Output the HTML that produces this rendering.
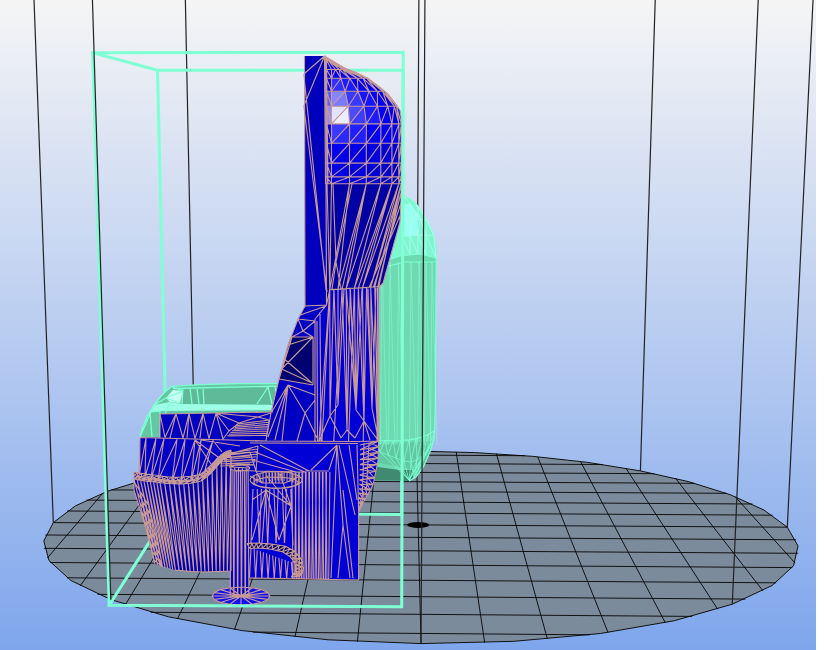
<!DOCTYPE html>
<html><head><meta charset="utf-8"><title>3D View</title>
<style>html,body{margin:0;padding:0;background:#fff;}body{width:826px;height:650px;overflow:hidden;}svg{display:block}</style>
</head><body>
<svg width="826" height="650" viewBox="0 0 826 650">
<defs>
<linearGradient id="bg" x1="0" y1="0" x2="0" y2="1"><stop offset="0" stop-color="#f5f5f5"/><stop offset="1" stop-color="#7fa6ec"/></linearGradient>
<clipPath id="vp"><rect x="0" y="0" width="816" height="650"/></clipPath>
</defs>
<rect x="0" y="0" width="826" height="650" fill="#fff"/>
<rect x="0" y="0" width="816" height="650" fill="url(#bg)"/>
<g clip-path="url(#vp)">
<polygon points="787.3,527.2 763.9,510.0 730.2,494.7 688.4,481.6 640.4,470.9 587.9,462.4 532.3,456.3 474.7,452.6 416.4,451.1 358.2,452.0 301.2,455.1 246.4,460.6 194.9,468.5 148.1,478.7 107.7,491.2 75.4,505.9 53.3,522.6 43.8,541.0 49.0,560.6 70.9,580.5 110.8,599.6 168.4,616.8 242.2,630.6 328.2,639.8 421.0,643.6 513.9,641.3 600.3,633.5 674.4,620.7 732.3,604.2 772.1,585.5 793.6,565.7 798.0,545.9" fill="#7c8b9c" stroke="#111" stroke-width="1"/>
<path d="M47.4,558.0 L103.0,492.9 M252.8,632.1 L589.6,634.8 M80.1,585.9 L160.6,475.6 M150.7,612.3 L692.2,616.4 M125.3,604.8 L209.1,466.0 M97.6,594.3 L745.5,599.1 M177.5,618.9 L253.6,459.8 M66.9,577.8 L776.1,582.8 M234.5,629.5 L295.8,455.6 M50.3,562.5 L792.3,567.6 M294.9,637.0 L336.7,452.9 M43.9,548.3 L798.2,553.3 M357.4,641.7 L376.7,451.5 M45.3,535.0 L796.1,539.8 M421.0,643.6 L416.4,451.1 M53.3,522.6 L787.3,527.2 M484.7,642.7 L456.2,451.9 M67.1,511.0 L772.6,515.2 M547.4,639.0 L496.4,453.7 M86.4,500.1 L752.4,504.0 M608.0,632.4 L537.7,456.8 M111.3,489.9 L726.5,493.3 M665.3,622.7 L580.5,461.5 M142.3,480.2 L694.4,483.3 M717.7,609.2 L625.9,468.2 M181.1,471.1 L654.5,473.7 M762.9,590.8 L675.6,478.4 M231.7,462.6 L602.8,464.5 M795.1,563.1 L735.1,496.6 M308.5,454.6 L524.9,455.7" stroke="#050505" stroke-width="0.9" fill="none"/>
<ellipse cx="418.2" cy="524.9" rx="11" ry="3" fill="#000"/>
<path d="M787.3,527.2 L817.3,-87.4 M640.4,470.9 L656.9,-53.5 M416.4,451.1 L419.1,-41.8 M194.9,468.5 L184.3,-52.1 M53.3,522.6 L30.9,-84.7" stroke="#222" stroke-width="1.2" fill="none"/>
<path d="M157.5 70.3L403.2 69.9 M403.2 69.9L401.7 514.4 M401.7 514.4L168.0 512.6 M168.0 512.6L157.5 70.3 M92.7 52.7L157.5 70.3 M109.2 605.2L168.0 512.6" stroke="#7fffd4" stroke-width="3" fill="none" stroke-linecap="square"/>
<polygon points="372.0,200.0 404.2,195.7 410.0,199.0 416.2,204.0 422.0,212.0 427.3,220.7 431.0,228.0 433.8,235.4 435.4,243.0 436.2,250.2 436.2,260.0 435.4,400.0 434.8,425.0 433.8,440.0 430.0,452.0 423.8,466.0 416.0,477.0 409.0,481.0 372.0,480.0" fill="#6ddab2" />
<polygon points="372.0,200.0 404.2,195.7 410.0,199.0 416.2,204.0 422.0,212.0 427.3,220.7 431.0,228.0 433.8,235.4 435.4,243.0 436.2,250.2 436.2,258.0 420.0,254.0 400.0,256.0 385.0,262.0 372.0,262.0" fill="#80f6d0" />
<polygon points="402.0,206.0 410.0,203.0 418.0,214.0 418.0,235.0 402.0,236.0" fill="#98fff2" />
<polygon points="372.0,466.0 385.0,468.0 400.0,470.0 412.0,470.0 416.0,477.0 409.0,481.0 372.0,480.0" fill="#3f8a70" />
<polygon points="372.0,445.0 433.5,441.0 430.0,452.0 423.8,466.0 416.0,477.0 412.0,470.0 395.0,466.0 372.0,462.0" fill="#62c8a2" />
<polyline points="404.2,195.7 410.0,199.0 416.2,204.0 422.0,212.0 427.3,220.7 431.0,228.0 433.8,235.4 435.4,243.0 436.2,250.2 436.2,260.0 435.4,400.0 434.8,425.0 433.8,440.0 430.0,452.0 423.8,466.0 416.0,477.0 409.0,481.0" fill="none" stroke="#7fffd4" stroke-width="1.2"/>
<path d="M380.0 262.0L400.0 256.0 M400.0 256.0L420.0 254.0 M420.0 254.0L436.0 258.0 M380.0 268.0L405.0 262.0 M405.0 262.0L436.0 262.0" stroke="#7fffd4" stroke-width="1.2" fill="none" opacity="1"/>
<path d="M402.0 220.0L412.0 219.0 M412.0 219.0L420.0 219.0 M420.0 219.0L427.3 220.7 M402.0 236.0L410.0 236.0 M410.0 236.0L418.0 235.0 M418.0 235.0L426.0 235.0 M426.0 235.0L433.8 235.4 M402.0 206.0L402.0 220.0 M402.0 206.0L412.0 219.0 M410.0 204.0L412.0 219.0 M410.0 204.0L420.0 219.0 M416.2 204.0L420.0 219.0 M416.2 204.0L427.3 220.7 M416.2 204.0L427.3 220.7 M402.0 220.0L402.0 236.0 M402.0 220.0L410.0 236.0 M412.0 219.0L410.0 236.0 M412.0 219.0L418.0 235.0 M420.0 219.0L418.0 235.0 M420.0 219.0L426.0 235.0 M427.3 220.7L426.0 235.0 M427.3 220.7L433.8 235.4 M427.3 220.7L433.8 235.4 M402.0 236.0L402.0 256.0 M402.0 236.0L410.0 254.0 M410.0 236.0L410.0 254.0 M410.0 236.0L418.0 254.0 M418.0 235.0L418.0 254.0 M418.0 235.0L426.0 255.0 M426.0 235.0L426.0 255.0 M426.0 235.0L436.0 258.0 M433.8 235.4L436.0 258.0 M404.2 195.7L410.0 204.0 M404.2 195.7L402.0 206.0" stroke="#a8fff0" stroke-width="0.9" fill="none" opacity="0.9"/>
<path d="M382.0 262.0L380.5 445.0 M382.0 262.0L387.0 445.0 M390.0 262.0L388.5 445.0 M390.0 262.0L395.0 445.0 M398.5 262.0L397.0 445.0 M398.5 262.0L403.5 445.0 M411.0 262.0L409.5 445.0 M411.0 262.0L416.0 445.0 M419.0 262.0L417.5 445.0 M419.0 262.0L424.0 445.0 M426.0 262.0L424.5 445.0 M426.0 262.0L431.0 445.0 M432.0 262.0L430.5 445.0 M432.0 262.0L437.0 445.0" stroke="#9cffe4" stroke-width="0.9" fill="none" opacity="0.45"/>
<polyline points="376.0,441.0 385.0,440.5 393.0,440.8 400.8,440.6 409.0,439.8 416.0,438.6 422.3,437.0 428.0,434.5 434.6,430.8" fill="none" stroke="#7fffd4" stroke-width="1.2"/>
<clipPath id="gb"><polygon points="372.0,200.0 404.2,195.7 410.0,199.0 416.2,204.0 422.0,212.0 427.3,220.7 431.0,228.0 433.8,235.4 435.4,243.0 436.2,250.2 436.2,260.0 435.4,400.0 434.8,425.0 433.8,440.0 430.0,452.0 423.8,466.0 416.0,477.0 409.0,481.0 372.0,480.0"/></clipPath>
<g clip-path="url(#gb)"><path d="M376.0 441.0L380.0 452.0 M385.0 440.5L388.0 455.0 M393.0 440.8L396.0 458.0 M400.8 440.6L404.0 461.0 M409.0 439.8L411.0 462.0 M416.0 438.6L417.0 460.0 M422.3 437.0L423.0 455.0 M428.0 434.5L428.0 449.0 M434.6 430.8L432.0 443.0 M385.0 440.5L380.0 452.0 M393.0 440.8L388.0 455.0 M400.8 440.6L396.0 458.0 M409.0 439.8L404.0 461.0 M416.0 438.6L411.0 462.0 M422.3 437.0L417.0 460.0 M428.0 434.5L423.0 455.0 M434.6 430.8L428.0 449.0 M380.0 452.0L388.0 455.0 M388.0 455.0L396.0 458.0 M396.0 458.0L404.0 461.0 M404.0 461.0L411.0 462.0 M411.0 462.0L417.0 460.0 M417.0 460.0L423.0 455.0 M423.0 455.0L428.0 449.0 M428.0 449.0L432.0 443.0 M380.0 452.0L409.0 480.0 M388.0 455.0L409.0 480.0 M396.0 458.0L409.0 480.0 M404.0 461.0L409.0 480.0 M411.0 462.0L409.0 480.0 M417.0 460.0L409.0 480.0 M423.0 455.0L409.0 480.0 M428.0 449.0L409.0 480.0 M432.0 443.0L409.0 480.0 M411.0 462.0L414.0 478.0 M417.0 460.0L414.0 478.0 M423.0 455.0L414.0 478.0 M428.0 449.0L414.0 478.0 M432.0 443.0L414.0 478.0" stroke="#7fffd4" stroke-width="0.9" fill="none" opacity="0.8"/></g>
<polygon points="171.4,386.3 200.0,384.6 240.0,383.6 285.0,383.5 285.0,440.0 139.8,440.0 139.8,437.5 142.0,429.0 147.0,417.0 154.0,405.0 162.0,395.0" fill="#64c6a2" />
<polygon points="183.0,388.0 283.0,386.0 283.0,404.0 182.0,404.0" fill="#5eba98" />
<polygon points="166.0,398.0 173.0,390.0 183.0,391.0 180.0,403.0 170.0,402.0" fill="#c4fff2" />
<polygon points="154.0,405.0 170.0,402.0 182.0,404.0 275.0,405.0 275.0,410.0 160.0,411.0 150.0,412.0" fill="#9cffe6" />
<path d="M171.4 386.3L200.0 384.6 M200.0 384.6L240.0 383.6 M240.0 383.6L285.0 383.5 M171.4 386.3L162.0 395.0 M162.0 395.0L154.0 405.0 M154.0 405.0L147.0 417.0 M147.0 417.0L142.0 429.0 M142.0 429.0L139.8 437.5 M173.0 388.5L283.0 386.0 M183.0 388.0L182.0 404.0 M190.0 388.0L192.0 404.0 M197.0 388.0L199.0 404.0 M203.0 388.0L204.0 404.0 M171.4 386.3L183.0 391.0 M166.0 398.0L183.0 391.0 M166.0 398.0L180.0 403.0 M154.0 405.0L166.0 398.0 M150.0 412.0L160.0 411.0 M160.0 411.0L160.0 437.0 M150.0 412.0L152.0 437.0 M154.0 405.0L140.0 437.0 M170.0 402.0L165.0 414.0 M257.0 404.0L268.0 387.0 M268.0 387.0L272.0 404.0 M275.0 387.0L278.0 404.0" stroke="#7fffd4" stroke-width="1.3" fill="none" opacity="1"/>
<polygon points="304.5,56.0 324.5,56.0 326.0,184.0 326.5,305.0 305.0,306.0" fill="#0000bc" />
<polygon points="324.9,55.9 333.5,64.8 344.6,67.9 355.7,72.2 366.8,77.7 377.9,85.7 387.7,93.7 395.1,103.0 400.0,110.3 401.3,119.0 401.2,184.0 326.0,184.0" fill="#0000f2" />
<polygon points="326.0,184.0 401.2,184.0 401.0,200.0 400.0,222.0 383.1,283.0 378.9,287.5 329.8,289.7 326.5,305.0" fill="#0000a4" />
<polygon points="326.5,305.0 329.8,289.7 378.9,287.5 378.6,441.0 378.0,461.0 373.0,485.0 363.0,503.0 359.0,511.0 358.6,580.0 250.0,578.0 250.0,441.0 315.0,441.0 315.0,319.0" fill="#0000d6" />
<polygon points="305.0,306.0 326.5,305.0 315.0,319.0 315.0,441.0 266.0,441.0 271.0,413.0 279.0,379.0 288.0,345.0 298.0,319.0" fill="#0000c4" />
<polygon points="292.0,337.0 313.0,337.0 313.0,385.0 279.0,379.0 285.0,360.0" fill="#000070" />
<polygon points="160.0,414.0 273.0,412.0 266.0,441.0 160.0,441.0" fill="#0000c0" />
<polygon points="140.0,437.0 266.0,441.0 266.0,490.0 139.0,484.0" fill="#0000c8" />
<polygon points="134.0,472.0 155.0,475.0 175.0,477.4 190.0,476.5 201.0,474.0 213.0,463.0 221.0,455.0 231.0,450.0 250.0,450.0 250.0,578.0 231.0,571.0 205.0,572.0 175.0,570.0 155.0,564.0 145.0,525.0 134.0,490.0" fill="#0000b0" />
<polygon points="270.0,596.0 269.0,598.3 266.1,600.5 261.5,602.4 255.5,603.8 248.5,604.7 241.0,605.0 233.5,604.7 226.5,603.8 220.5,602.4 215.9,600.5 213.0,598.3 212.0,596.0 213.0,593.7 215.9,591.5 220.5,589.6 226.5,588.2 233.5,587.3 241.0,587.0 248.5,587.3 255.5,588.2 261.5,589.6 266.1,591.5 269.0,593.7 270.0,596.0" fill="#1010f0" />
<polygon points="231.0,470.0 249.0,470.0 249.0,597.0 231.0,597.0" fill="#0000c8" />
<polygon points="331.5,91.3 345.2,91.3 331.5,106.2" fill="#8585ff" />
<polygon points="345.2,91.3 348.3,106.2 331.5,106.2" fill="#7a7aff" />
<polygon points="345.2,91.3 358.0,91.3 348.3,106.2" fill="#3838ff" />
<polygon points="358.0,91.3 364.0,106.2 348.3,106.2" fill="#3838ff" />
<polygon points="331.5,106.2 348.3,106.2 331.5,123.9" fill="#e2e2fb" />
<polygon points="348.3,106.2 349.6,123.9 331.5,123.9" fill="#ececfc" />
<polygon points="348.3,106.2 364.0,106.2 349.6,123.9" fill="#4a4aff" />
<polygon points="364.0,106.2 366.4,123.9 349.6,123.9" fill="#3c3cff" />
<polygon points="364.0,106.2 377.5,106.2 366.4,123.9" fill="#1c1cff" />
<polygon points="377.5,106.2 380.9,123.9 366.4,123.9" fill="#1c1cff" />
<polygon points="331.5,123.9 349.6,123.9 331.5,143.3" fill="#3a3aff" />
<polygon points="349.6,123.9 349.5,143.3 331.5,143.3" fill="#2a2aff" />
<polygon points="349.6,123.9 366.4,123.9 349.5,143.3" fill="#2020ff" />
<polygon points="366.4,123.9 366.3,143.3 349.5,143.3" fill="#2020ff" />
<polygon points="331.5,78.3 340.9,78.3 331.5,91.3" fill="#3030ff" />
<polygon points="340.9,78.3 345.2,91.3 331.5,91.3" fill="#3030ff" />
<polygon points="340.9,78.3 349.8,78.3 345.2,91.3" fill="#1a1aff" />
<polygon points="349.8,78.3 358.0,91.3 345.2,91.3" fill="#1a1aff" />
<polygon points="358.0,91.3 369.0,91.3 364.0,106.2" fill="#1414ff" />
<polygon points="369.0,91.3 377.5,106.2 364.0,106.2" fill="#1414ff" />
<polygon points="331.5,143.3 349.5,143.3 331.5,163.1" fill="#0000ec" />
<polygon points="349.5,143.3 349.5,163.1 331.5,163.1" fill="#0000ec" />
<polygon points="349.5,143.3 366.3,143.3 349.5,163.1" fill="#0000e4" />
<polygon points="366.3,143.3 366.3,163.1 349.5,163.1" fill="#0000e4" />
<polygon points="366.3,143.3 380.8,143.3 366.3,163.1" fill="#0000dc" />
<polygon points="380.8,143.3 380.8,163.1 366.3,163.1" fill="#0000dc" />
<polygon points="380.8,143.3 391.9,143.3 380.8,163.1" fill="#0000d4" />
<polygon points="391.9,143.3 391.9,163.1 380.8,163.1" fill="#0000d4" />
<polygon points="391.9,143.3 398.8,143.3 391.9,163.1" fill="#0000cc" />
<polygon points="398.8,143.3 398.8,163.1 391.9,163.1" fill="#0000cc" />
<polygon points="398.8,143.3 401.2,143.3 398.8,163.1" fill="#0000c4" />
<polygon points="401.2,143.3 401.2,163.1 398.8,163.1" fill="#0000c4" />
<polygon points="331.5,163.1 349.5,163.1 331.5,176.9" fill="#0000e6" />
<polygon points="349.5,163.1 349.5,176.9 331.5,176.9" fill="#0000e6" />
<polygon points="349.5,163.1 366.3,163.1 349.5,176.9" fill="#0000de" />
<polygon points="366.3,163.1 366.3,176.9 349.5,176.9" fill="#0000de" />
<polygon points="366.3,163.1 380.8,163.1 366.3,176.9" fill="#0000d6" />
<polygon points="380.8,163.1 380.8,176.9 366.3,176.9" fill="#0000d6" />
<polygon points="380.8,163.1 391.9,163.1 380.8,176.9" fill="#0000ce" />
<polygon points="391.9,163.1 391.9,176.9 380.8,176.9" fill="#0000ce" />
<polygon points="391.9,163.1 398.8,163.1 391.9,176.9" fill="#0000c6" />
<polygon points="398.8,163.1 398.8,176.9 391.9,176.9" fill="#0000c6" />
<polygon points="398.8,163.1 401.2,163.1 398.8,176.9" fill="#0000be" />
<polygon points="401.2,163.1 401.2,176.9 398.8,176.9" fill="#0000be" />
<polygon points="331.5,176.9 349.5,176.9 331.5,183.8" fill="#0000e0" />
<polygon points="349.5,176.9 349.5,183.8 331.5,183.8" fill="#0000e0" />
<polygon points="349.5,176.9 366.3,176.9 349.5,183.8" fill="#0000d8" />
<polygon points="366.3,176.9 366.3,183.8 349.5,183.8" fill="#0000d8" />
<polygon points="366.3,176.9 380.8,176.9 366.3,183.8" fill="#0000d0" />
<polygon points="380.8,176.9 380.8,183.8 366.3,183.8" fill="#0000d0" />
<polygon points="380.8,176.9 391.9,176.9 380.8,183.8" fill="#0000c8" />
<polygon points="391.9,176.9 391.9,183.8 380.8,183.8" fill="#0000c8" />
<polygon points="391.9,176.9 398.8,176.9 391.9,183.8" fill="#0000c0" />
<polygon points="398.8,176.9 398.8,183.8 391.9,183.8" fill="#0000c0" />
<polygon points="398.8,176.9 401.2,176.9 398.8,183.8" fill="#0000b8" />
<polygon points="401.2,176.9 401.2,183.8 398.8,183.8" fill="#0000b8" />
<polygon points="346.5,69.5 347.0,69.5 366.8,78.3" fill="#0000d8" />
<polygon points="347.0,69.5 368.0,78.3 366.8,78.3" fill="#0000d8" />
<polygon points="344.9,69.5 346.5,69.5 363.1,78.3" fill="#0000ea" />
<polygon points="346.5,69.5 366.8,78.3 363.1,78.3" fill="#0000ea" />
<polygon points="366.8,78.3 368.0,78.3 382.7,91.3" fill="#0000d8" />
<polygon points="368.0,78.3 384.5,91.3 382.7,91.3" fill="#0000d8" />
<polygon points="363.1,78.3 366.8,78.3 377.4,91.3" fill="#0000ea" />
<polygon points="366.8,78.3 382.7,91.3 377.4,91.3" fill="#0000ea" />
<polygon points="382.7,91.3 384.5,91.3 394.3,106.2" fill="#0000d8" />
<polygon points="384.5,91.3 396.5,106.2 394.3,106.2" fill="#0000d8" />
<polygon points="377.4,91.3 382.7,91.3 387.8,106.2" fill="#0000ea" />
<polygon points="382.7,91.3 394.3,106.2 387.8,106.2" fill="#0000ea" />
<polygon points="394.3,106.2 396.5,106.2 398.9,123.9" fill="#0000d8" />
<polygon points="396.5,106.2 401.3,123.9 398.9,123.9" fill="#0000d8" />
<polygon points="387.8,106.2 394.3,106.2 391.9,123.9" fill="#0000ea" />
<polygon points="394.3,106.2 398.9,123.9 391.9,123.9" fill="#0000ea" />
<polygon points="398.9,123.9 401.3,123.9 398.8,143.3" fill="#0000d8" />
<polygon points="401.3,123.9 401.2,143.3 398.8,143.3" fill="#0000d8" />
<polygon points="391.9,123.9 398.9,123.9 391.9,143.3" fill="#0000ea" />
<polygon points="398.9,123.9 398.8,143.3 391.9,143.3" fill="#0000ea" />
<polygon points="327.0,106.2 331.5,106.2 331.5,123.9 327.3,123.9" fill="#8c8cff" />
<polygon points="327.0,91.3 331.5,91.3 331.5,106.2 327.3,106.2" fill="#5a5aff" />
<polygon points="247.0,543.5 258.0,543.0 270.0,543.8 285.0,546.0 295.0,551.5 302.0,560.0 304.0,570.0 300.0,576.0 291.0,577.0 296.0,571.0 295.0,563.0 290.0,556.5 282.0,551.5 270.0,549.0 259.0,548.0 250.0,548.5" fill="#00006a" />
<polygon points="302.0,480.0 301.3,481.9 299.4,483.7 296.3,485.3 292.2,486.6 287.3,487.7 281.8,488.3 276.0,488.5 270.2,488.3 264.7,487.7 259.8,486.6 255.7,485.3 252.6,483.7 250.7,481.9 250.0,480.0 250.7,478.1 252.6,476.3 255.7,474.7 259.8,473.4 264.7,472.3 270.2,471.7 276.0,471.5 281.8,471.7 287.3,472.3 292.2,473.4 296.3,474.7 299.4,476.3 301.3,478.1 302.0,480.0" fill="#0000a8" />
<polygon points="298.0,482.5 297.3,483.9 295.1,485.2 291.6,486.4 287.0,487.3 281.7,487.8 276.0,488.0 270.3,487.8 265.0,487.3 260.4,486.4 256.9,485.2 254.7,483.9 254.0,482.5 254.7,481.1 256.9,479.8 260.4,478.6 265.0,477.7 270.3,477.2 276.0,477.0 281.7,477.2 287.0,477.7 291.6,478.6 295.1,479.8 297.3,481.1 298.0,482.5" fill="#0000c8" />
<path d="M324.5 56.0L303.8 74.0 M324.5 56.0L303.8 106.0 M303.8 74.0L326.0 290.0 M303.8 106.0L327.0 292.0 M304.5 56.0L305.0 306.0 M324.5 56.0L325.5 184.0 M325.5 57.0L327.0 184.0 M326.5 60.0L328.0 184.0 M326.0 184.0L326.5 305.0 M327.0 184.0L329.8 289.7 M331.5 69.5L335.5 69.5 M335.5 69.5L339.2 69.5 M339.2 69.5L342.5 69.5 M342.5 69.5L344.9 69.5 M344.9 69.5L346.5 69.5 M346.5 69.5L347.0 69.5 M331.5 78.3L340.9 78.3 M340.9 78.3L349.8 78.3 M349.8 78.3L357.3 78.3 M357.3 78.3L363.1 78.3 M363.1 78.3L366.8 78.3 M366.8 78.3L368.0 78.3 M331.5 91.3L345.2 91.3 M345.2 91.3L358.0 91.3 M358.0 91.3L369.0 91.3 M369.0 91.3L377.4 91.3 M377.4 91.3L382.7 91.3 M382.7 91.3L384.5 91.3 M331.5 106.2L348.3 106.2 M348.3 106.2L364.0 106.2 M364.0 106.2L377.5 106.2 M377.5 106.2L387.8 106.2 M387.8 106.2L394.3 106.2 M394.3 106.2L396.5 106.2 M331.5 123.9L349.6 123.9 M349.6 123.9L366.4 123.9 M366.4 123.9L380.9 123.9 M380.9 123.9L391.9 123.9 M391.9 123.9L398.9 123.9 M398.9 123.9L401.3 123.9 M331.5 143.3L349.5 143.3 M349.5 143.3L366.3 143.3 M366.3 143.3L380.8 143.3 M380.8 143.3L391.9 143.3 M391.9 143.3L398.8 143.3 M398.8 143.3L401.2 143.3 M331.5 163.1L349.5 163.1 M349.5 163.1L366.3 163.1 M366.3 163.1L380.8 163.1 M380.8 163.1L391.9 163.1 M391.9 163.1L398.8 163.1 M398.8 163.1L401.2 163.1 M331.5 176.9L349.5 176.9 M349.5 176.9L366.3 176.9 M366.3 176.9L380.8 176.9 M380.8 176.9L391.9 176.9 M391.9 176.9L398.8 176.9 M398.8 176.9L401.2 176.9 M331.5 183.8L349.5 183.8 M349.5 183.8L366.3 183.8 M366.3 183.8L380.8 183.8 M380.8 183.8L391.9 183.8 M391.9 183.8L398.8 183.8 M398.8 183.8L401.2 183.8 M331.5 69.5L331.5 78.3 M335.5 69.5L331.5 78.3 M335.5 69.5L340.9 78.3 M339.2 69.5L340.9 78.3 M339.2 69.5L349.8 78.3 M342.5 69.5L349.8 78.3 M342.5 69.5L357.3 78.3 M344.9 69.5L357.3 78.3 M344.9 69.5L363.1 78.3 M346.5 69.5L363.1 78.3 M346.5 69.5L366.8 78.3 M347.0 69.5L366.8 78.3 M347.0 69.5L368.0 78.3 M331.5 78.3L331.5 91.3 M340.9 78.3L331.5 91.3 M340.9 78.3L345.2 91.3 M349.8 78.3L345.2 91.3 M349.8 78.3L358.0 91.3 M357.3 78.3L358.0 91.3 M357.3 78.3L369.0 91.3 M363.1 78.3L369.0 91.3 M363.1 78.3L377.4 91.3 M366.8 78.3L377.4 91.3 M366.8 78.3L382.7 91.3 M368.0 78.3L382.7 91.3 M368.0 78.3L384.5 91.3 M331.5 91.3L331.5 106.2 M345.2 91.3L331.5 106.2 M345.2 91.3L348.3 106.2 M358.0 91.3L348.3 106.2 M358.0 91.3L364.0 106.2 M369.0 91.3L364.0 106.2 M369.0 91.3L377.5 106.2 M377.4 91.3L377.5 106.2 M377.4 91.3L387.8 106.2 M382.7 91.3L387.8 106.2 M382.7 91.3L394.3 106.2 M384.5 91.3L394.3 106.2 M384.5 91.3L396.5 106.2 M331.5 106.2L331.5 123.9 M348.3 106.2L331.5 123.9 M348.3 106.2L349.6 123.9 M364.0 106.2L349.6 123.9 M364.0 106.2L366.4 123.9 M377.5 106.2L366.4 123.9 M377.5 106.2L380.9 123.9 M387.8 106.2L380.9 123.9 M387.8 106.2L391.9 123.9 M394.3 106.2L391.9 123.9 M394.3 106.2L398.9 123.9 M396.5 106.2L398.9 123.9 M396.5 106.2L401.3 123.9 M331.5 123.9L331.5 143.3 M349.6 123.9L331.5 143.3 M349.6 123.9L349.5 143.3 M366.4 123.9L349.5 143.3 M366.4 123.9L366.3 143.3 M380.9 123.9L366.3 143.3 M380.9 123.9L380.8 143.3 M391.9 123.9L380.8 143.3 M391.9 123.9L391.9 143.3 M398.9 123.9L391.9 143.3 M398.9 123.9L398.8 143.3 M401.3 123.9L398.8 143.3 M401.3 123.9L401.2 143.3 M331.5 143.3L331.5 163.1 M349.5 143.3L331.5 163.1 M349.5 143.3L349.5 163.1 M366.3 143.3L349.5 163.1 M366.3 143.3L366.3 163.1 M380.8 143.3L366.3 163.1 M380.8 143.3L380.8 163.1 M391.9 143.3L380.8 163.1 M391.9 143.3L391.9 163.1 M398.8 143.3L391.9 163.1 M398.8 143.3L398.8 163.1 M401.2 143.3L398.8 163.1 M401.2 143.3L401.2 163.1 M331.5 163.1L331.5 176.9 M349.5 163.1L331.5 176.9 M349.5 163.1L349.5 176.9 M366.3 163.1L349.5 176.9 M366.3 163.1L366.3 176.9 M380.8 163.1L366.3 176.9 M380.8 163.1L380.8 176.9 M391.9 163.1L380.8 176.9 M391.9 163.1L391.9 176.9 M398.8 163.1L391.9 176.9 M398.8 163.1L398.8 176.9 M401.2 163.1L398.8 176.9 M401.2 163.1L401.2 176.9 M331.5 176.9L331.5 183.8 M349.5 176.9L331.5 183.8 M349.5 176.9L349.5 183.8 M366.3 176.9L349.5 183.8 M366.3 176.9L366.3 183.8 M380.8 176.9L366.3 183.8 M380.8 176.9L380.8 183.8 M391.9 176.9L380.8 183.8 M391.9 176.9L391.9 183.8 M398.8 176.9L391.9 183.8 M398.8 176.9L398.8 183.8 M401.2 176.9L398.8 183.8 M401.2 176.9L401.2 183.8 M324.5 56.0L331.5 69.5 M324.5 56.0L335.5 69.5 M324.5 56.0L339.2 69.5 M324.5 56.0L342.5 69.5 M324.5 56.0L344.9 69.5 M324.5 56.0L346.5 69.5 M324.5 56.0L347.0 69.5 M324.9 55.9L333.5 64.8 M333.5 64.8L344.6 67.9 M344.6 67.9L355.7 72.2 M355.7 72.2L366.8 77.7 M366.8 77.7L377.9 85.7 M377.9 85.7L387.7 93.7 M387.7 93.7L395.1 103.0 M395.1 103.0L400.0 110.3 M400.0 110.3L401.3 119.0 M401.3 119.0L401.2 184.0 M326.0 69.5L331.5 69.5 M326.0 78.3L331.5 78.3 M326.0 91.3L331.5 91.3 M326.0 106.2L331.5 106.2 M326.0 123.9L331.5 123.9 M326.0 143.3L331.5 143.3 M326.0 163.1L331.5 163.1 M326.0 176.9L331.5 176.9 M326.0 183.8L331.5 183.8 M326.5 69.5L331.5 78.3 M326.5 78.3L331.5 91.3 M326.5 91.3L331.5 106.2 M326.5 106.2L331.5 123.9 M326.5 123.9L331.5 143.3 M326.5 143.3L331.5 163.1 M326.5 163.1L331.5 176.9 M326.5 176.9L331.5 183.8 M329.8 289.7L331.5 183.8 M329.8 289.7L349.5 183.8 M338.0 289.2L349.5 183.8 M338.0 289.2L366.3 183.8 M342.1 288.9L366.3 183.8 M346.2 288.6L366.3 183.8 M346.2 288.6L380.8 183.8 M354.4 288.1L380.8 183.8 M354.4 288.1L391.9 183.8 M358.4 287.8L391.9 183.8 M362.5 287.5L391.9 183.8 M362.5 287.5L398.8 183.8 M370.7 287.0L398.8 183.8 M370.7 287.0L401.2 183.8 M374.8 286.7L401.2 183.8 M378.9 286.5L401.2 183.8 M378.9 286.5L401.2 183.8 M329.8 289.7L333.9 289.4 M333.9 289.4L338.0 289.2 M338.0 289.2L342.1 288.9 M342.1 288.9L346.2 288.6 M346.2 288.6L350.3 288.3 M350.3 288.3L354.4 288.1 M354.4 288.1L358.4 287.8 M358.4 287.8L362.5 287.5 M362.5 287.5L366.6 287.3 M366.6 287.3L370.7 287.0 M370.7 287.0L374.8 286.7 M374.8 286.7L378.9 286.5 M401.2 192.0L377.5 287.5 M401.0 203.0L373.3 287.5 M400.8 214.0L369.1 287.5 M401.2 184.0L401.0 200.0 M401.0 200.0L400.0 222.0 M400.0 222.0L383.1 283.0 M383.1 283.0L378.9 287.5 M333.0 184.0L336.0 262.0 M336.0 262.0L352.0 184.0 M336.0 262.0L341.0 289.0 M336.0 262.0L332.0 289.0 M329.8 289.7L330.0 416.0 M333.9 289.4L330.0 416.0 M333.9 289.4L338.0 405.0 M338.0 289.2L338.0 405.0 M342.1 288.9L347.0 430.0 M342.1 288.9L347.0 430.0 M346.2 288.6L347.0 430.0 M350.3 288.3L347.0 430.0 M350.3 288.3L356.0 410.0 M354.4 288.1L356.0 410.0 M358.4 287.8L364.0 421.0 M358.4 287.8L364.0 421.0 M362.5 287.5L364.0 421.0 M366.6 287.3L364.0 421.0 M366.6 287.3L372.0 408.0 M370.7 287.0L372.0 408.0 M374.8 286.7L378.0 441.0 M374.8 286.7L378.0 441.0 M378.9 286.5L378.0 441.0 M329.8 289.7L319.0 441.0 M333.9 289.4L330.0 416.0 M342.1 288.9L333.8 441.0 M346.2 288.6L356.0 410.0 M354.4 288.1L348.5 441.0 M358.4 287.8L356.0 410.0 M366.6 287.3L363.2 441.0 M370.7 287.0L378.0 441.0 M378.9 286.5L378.0 441.0 M338.0 405.0L334.0 289.4 M356.0 410.0L350.0 289.0 M372.0 408.0L368.0 288.6 M372.0 408.0L376.0 288.0 M338.0 405.0L344.0 289.0 M356.0 410.0L362.0 288.8 M330.0 416.0L319.0 441.0 M330.0 416.0L341.0 438.0 M347.0 430.0L341.0 438.0 M347.0 430.0L355.0 438.0 M364.0 421.0L355.0 438.0 M364.0 421.0L370.0 440.0 M364.0 421.0L378.6 441.0 M338.0 405.0L330.0 416.0 M356.0 410.0L364.0 421.0 M372.0 408.0L378.6 441.0 M378.9 287.5L378.6 441.0 M377.5 288.0L377.0 441.0 M315.0 319.0L315.0 441.0 M317.0 321.0L317.5 441.0 M320.0 312.0L321.0 441.0 M326.5 305.0L315.0 319.0 M329.8 289.7L326.5 305.0 M329.8 289.7L322.0 441.0 M305.0 306.0L326.5 305.0 M300.2 315.0L326.0 306.0 M298.0 319.0L315.0 321.0 M303.0 331.0L315.0 321.0 M298.0 319.0L303.0 331.0 M303.0 331.0L313.0 337.0 M292.0 337.0L313.0 337.0 M313.0 337.0L313.0 385.0 M288.0 345.0L313.0 337.0 M281.6 369.0L313.0 337.0 M284.3 359.0L312.0 383.0 M281.6 369.0L312.0 383.0 M279.0 379.0L313.0 385.0 M288.0 385.0L305.0 413.0 M288.0 385.0L271.0 413.0 M288.0 385.0L268.0 437.0 M288.0 385.0L275.0 440.0 M288.0 385.0L282.0 441.0 M305.0 413.0L317.0 438.0 M305.0 306.0L298.0 319.0 M298.0 319.0L288.0 345.0 M288.0 345.0L279.0 379.0 M279.0 379.0L271.0 413.0 M271.0 413.0L266.0 441.0 M292.0 337.0L285.0 360.0 M285.0 360.0L279.0 379.0 M305.0 413.0L297.0 441.0 M305.0 413.0L315.0 400.0 M288.0 385.0L315.0 395.0 M303.0 331.0L292.0 337.0 M140.0 437.5L266.0 441.0 M250.0 441.0L358.0 441.5 M250.0 443.0L358.0 443.5 M358.0 441.5L378.6 441.0 M260.0 445.0L309.0 471.0 M337.0 445.0L311.0 470.0 M337.0 445.0L329.0 470.0 M255.0 452.0L305.0 472.0 M305.0 471.0L329.0 471.0 M252.0 460.0L300.0 473.0 M337.0 445.0L343.0 525.0 M339.0 445.0L355.0 515.0 M343.0 490.0L353.0 578.0 M349.0 445.0L357.0 500.0 M337.0 445.0L331.0 578.0 M343.0 525.0L338.0 578.0 M343.0 525.0L350.0 578.0 M358.6 511.0L358.6 580.0 M250.0 578.0L358.6 580.0 M357.0 445.0L358.6 511.0 M291.8 472.0L293.0 579.0 M295.9 472.0L294.7 579.0 M295.2 472.0L296.4 579.0 M299.3 472.0L298.1 579.0 M298.6 472.0L299.8 579.0 M302.7 472.0L301.5 579.0 M302.0 472.0L303.2 579.0 M306.1 472.0L304.9 579.0 M305.4 472.0L306.6 579.0 M309.5 472.0L308.3 579.0 M308.8 472.0L310.0 579.0 M312.9 472.0L311.7 579.0 M312.2 472.0L313.4 579.0 M316.3 472.0L315.1 579.0 M315.6 472.0L316.8 579.0 M319.7 472.0L318.5 579.0 M319.0 472.0L320.2 579.0 M323.1 472.0L321.9 579.0 M322.4 472.0L323.6 579.0 M326.5 472.0L325.3 579.0 M325.8 472.0L327.0 579.0 M329.9 472.0L328.7 579.0 M251.0 548.0L249.5 578.0 M254.1 549.1L255.6 578.0 M257.2 550.2L255.7 578.0 M260.3 551.3L261.8 578.0 M263.4 552.3L261.9 578.0 M266.5 553.4L268.0 578.0 M269.6 554.5L268.1 578.0 M272.7 555.6L274.2 578.0 M275.8 556.7L274.3 578.0 M278.9 557.8L280.4 578.0 M282.0 558.9L280.5 578.0 M285.1 559.9L286.6 578.0 M288.2 561.0L286.7 578.0 M291.3 562.1L292.8 578.0 M266.0 490.0L279.0 540.0 M291.0 506.0L279.0 540.0 M266.0 490.0L291.0 506.0 M252.0 500.0L266.0 490.0 M252.0 540.0L266.0 490.0 M266.0 490.0L262.0 543.0 M291.0 506.0L293.0 545.0 M266.0 475.0L266.0 490.0 M280.0 474.0L291.0 506.0 M266.0 475.0L291.0 506.0 M378.6 441.0L360.0 445.0 M378.6 441.0L360.0 449.8 M369.3 443.0L378.4 446.6 M378.4 446.7L360.0 449.9 M378.4 446.7L360.0 454.6 M369.2 448.3L378.3 452.3 M378.3 452.4L360.0 454.7 M378.3 452.4L360.0 459.5 M369.1 453.6L378.1 458.0 M378.1 458.1L360.0 459.6 M378.1 458.1L359.9 464.5 M369.0 458.9L377.3 464.3 M377.3 464.4L359.9 464.6 M377.3 464.4L359.8 469.6 M368.6 464.5L375.9 471.1 M375.9 471.3L359.8 469.7 M375.9 471.3L359.6 474.8 M367.8 470.5L374.5 478.0 M374.4 478.1L359.6 474.9 M374.4 478.1L359.5 479.9 M367.0 476.5L373.0 484.9 M373.0 485.0L359.5 480.0 M373.0 485.0L359.4 484.2 M366.2 482.5L370.2 490.0 M370.1 490.1L359.4 484.3 M370.1 490.1L359.2 488.5 M364.8 487.2L367.3 495.2 M367.3 495.3L359.2 488.6 M367.3 495.3L359.1 492.8 M363.2 491.9L364.5 500.3 M364.4 500.4L359.1 492.9 M364.4 500.4L359.0 497.2 M361.8 496.6L362.5 504.1 M362.4 504.1L359.0 497.3 M362.4 504.1L359.0 501.8 M360.7 500.7L361.3 506.4 M361.3 506.4L359.0 501.9 M361.3 506.4L359.0 506.3 M360.1 504.1L360.2 508.7 M360.1 508.7L359.0 506.4 M360.1 508.7L359.0 510.9 M359.6 507.6L359.0 511.0 M359.0 511.0L359.0 511.0 M359.0 511.0L359.0 511.0 M359.0 511.0L359.0 511.0 M378.6 441.0L378.0 461.0 M378.0 461.0L373.0 485.0 M373.0 485.0L363.0 503.0 M363.0 503.0L359.0 511.0 M369.0 443.0L366.0 497.0 M364.0 443.0L362.0 505.0 M247.0 543.5L251.8 543.3 M251.8 543.3L256.6 543.1 M256.6 543.1L261.8 543.2 M261.8 543.2L267.0 543.6 M267.0 543.6L272.8 544.2 M272.8 544.2L279.4 545.2 M279.4 545.2L285.6 546.3 M285.6 546.3L290.0 548.8 M290.0 548.8L294.4 551.2 M294.4 551.2L297.6 554.7 M297.6 554.7L300.7 558.4 M300.7 558.4L302.5 562.5 M302.5 562.5L303.4 566.9 M303.4 566.9L303.5 570.8 M303.5 570.8L301.8 573.4 M301.8 573.4L300.0 576.0 M250.0 548.5L253.9 548.3 M253.9 548.3L257.9 548.1 M257.9 548.1L262.4 548.3 M262.4 548.3L267.2 548.8 M267.2 548.8L272.2 549.5 M272.2 549.5L277.5 550.6 M277.5 550.6L282.5 551.8 M282.5 551.8L286.0 554.0 M286.0 554.0L289.5 556.2 M289.5 556.2L291.9 558.9 M291.9 558.9L294.1 561.8 M294.1 561.8L295.2 565.0 M295.2 565.0L295.7 568.5 M295.7 568.5L295.4 571.8 M295.4 571.8L293.2 574.4 M293.2 574.4L291.0 577.0 M247.0 543.5L250.0 548.5 M250.0 548.5L251.8 543.3 M251.8 543.3L253.9 548.3 M253.9 548.3L256.6 543.1 M256.6 543.1L257.9 548.1 M257.9 548.1L261.8 543.2 M261.8 543.2L262.4 548.3 M262.4 548.3L267.0 543.6 M267.0 543.6L267.2 548.8 M267.2 548.8L272.8 544.2 M272.8 544.2L272.2 549.5 M272.2 549.5L279.4 545.2 M279.4 545.2L277.5 550.6 M277.5 550.6L285.6 546.3 M285.6 546.3L282.5 551.8 M282.5 551.8L290.0 548.8 M290.0 548.8L286.0 554.0 M286.0 554.0L294.4 551.2 M294.4 551.2L289.5 556.2 M289.5 556.2L297.6 554.7 M297.6 554.7L291.9 558.9 M291.9 558.9L300.7 558.4 M300.7 558.4L294.1 561.8 M294.1 561.8L302.5 562.5 M302.5 562.5L295.2 565.0 M295.2 565.0L303.4 566.9 M303.4 566.9L295.7 568.5 M295.7 568.5L303.5 570.8 M303.5 570.8L295.4 571.8 M295.4 571.8L301.8 573.4 M301.8 573.4L293.2 574.4 M293.2 574.4L300.0 576.0 M300.0 576.0L291.0 577.0 M302.0 480.0L301.3 481.9 M301.3 481.9L299.4 483.7 M299.4 483.7L296.3 485.3 M296.3 485.3L292.2 486.6 M292.2 486.6L287.3 487.7 M287.3 487.7L281.8 488.3 M281.8 488.3L276.0 488.5 M276.0 488.5L270.2 488.3 M270.2 488.3L264.7 487.7 M264.7 487.7L259.8 486.6 M259.8 486.6L255.7 485.3 M255.7 485.3L252.6 483.7 M252.6 483.7L250.7 481.9 M250.7 481.9L250.0 480.0 M250.0 480.0L250.7 478.1 M250.7 478.1L252.6 476.3 M252.6 476.3L255.7 474.7 M255.7 474.7L259.8 473.4 M259.8 473.4L264.7 472.3 M264.7 472.3L270.2 471.7 M270.2 471.7L276.0 471.5 M276.0 471.5L281.8 471.7 M281.8 471.7L287.3 472.3 M287.3 472.3L292.2 473.4 M292.2 473.4L296.3 474.7 M296.3 474.7L299.4 476.3 M299.4 476.3L301.3 478.1 M301.3 478.1L302.0 480.0 M298.0 482.5L297.3 483.9 M297.3 483.9L295.1 485.2 M295.1 485.2L291.6 486.4 M291.6 486.4L287.0 487.3 M287.0 487.3L281.7 487.8 M281.7 487.8L276.0 488.0 M276.0 488.0L270.3 487.8 M270.3 487.8L265.0 487.3 M265.0 487.3L260.4 486.4 M260.4 486.4L256.9 485.2 M256.9 485.2L254.7 483.9 M254.7 483.9L254.0 482.5 M254.0 482.5L254.7 481.1 M254.7 481.1L256.9 479.8 M256.9 479.8L260.4 478.6 M260.4 478.6L265.0 477.7 M265.0 477.7L270.3 477.2 M270.3 477.2L276.0 477.0 M276.0 477.0L281.7 477.2 M281.7 477.2L287.0 477.7 M287.0 477.7L291.6 478.6 M291.6 478.6L295.1 479.8 M295.1 479.8L297.3 481.1 M297.3 481.1L298.0 482.5 M300.1 482.3L298.8 483.6 M298.8 483.6L296.6 484.9 M296.6 484.9L293.5 486.0 M293.5 486.0L289.8 486.9 M289.8 486.9L285.5 487.6 M285.5 487.6L280.9 488.1 M280.9 488.1L276.0 488.2 M276.0 488.2L271.1 488.1 M271.1 488.1L266.5 487.6 M266.5 487.6L262.2 486.9 M262.2 486.9L258.5 486.0 M258.5 486.0L255.4 484.9 M255.4 484.9L253.2 483.6 M253.2 483.6L251.9 482.3 M254.0 475.5L254.0 484.5 M257.0 474.2L257.0 483.2 M260.0 473.3L260.0 482.3 M263.0 472.6L263.0 481.6 M266.0 472.2L266.0 481.2 M269.0 471.8L269.0 480.8 M272.0 471.6L272.0 480.6 M275.0 471.5L275.0 480.5 M278.0 471.5L278.0 480.5 M281.0 471.7L281.0 480.7 M284.0 471.9L284.0 480.9 M287.0 472.3L287.0 481.3 M290.0 472.8L290.0 481.8 M293.0 473.6L293.0 482.6 M296.0 474.6L296.0 483.6 M253.0 489.0L251.0 543.0 M257.2 489.0L259.2 543.0 M261.4 489.0L259.4 543.0 M265.6 489.0L267.6 543.0 M269.8 489.0L267.8 543.0 M274.0 489.0L276.0 543.0 M278.2 489.0L276.2 543.0 M282.4 489.0L284.4 543.0 M286.6 489.0L284.6 543.0 M290.8 489.0L292.8 543.0 M231.0 468.0L230.2 597.0 M232.9 470.0L233.7 597.0 M234.8 468.0L234.0 597.0 M236.7 470.0L237.5 597.0 M238.6 468.0L237.8 597.0 M240.5 470.0L241.3 597.0 M242.4 468.0L241.6 597.0 M244.3 470.0L245.1 597.0 M246.2 468.0L245.4 597.0 M248.1 470.0L248.9 597.0 M270.0 596.0L267.8 599.4 M267.8 599.4L261.5 602.4 M261.5 602.4L252.1 604.3 M252.1 604.3L241.0 605.0 M241.0 605.0L229.9 604.3 M229.9 604.3L220.5 602.4 M220.5 602.4L214.2 599.4 M214.2 599.4L212.0 596.0 M212.0 596.0L214.2 592.6 M214.2 592.6L220.5 589.6 M220.5 589.6L229.9 587.7 M229.9 587.7L241.0 587.0 M241.0 587.0L252.1 587.7 M252.1 587.7L261.5 589.6 M261.5 589.6L267.8 592.6 M267.8 592.6L270.0 596.0 M241.0 596.0L270.0 596.0 M241.0 596.0L267.8 599.4 M241.0 596.0L261.5 602.4 M241.0 596.0L252.1 604.3 M241.0 596.0L241.0 605.0 M241.0 596.0L229.9 604.3 M241.0 596.0L220.5 602.4 M241.0 596.0L214.2 599.4 M241.0 596.0L212.0 596.0 M241.0 596.0L214.2 592.6 M241.0 596.0L220.5 589.6 M241.0 596.0L229.9 587.7 M241.0 596.0L241.0 587.0 M241.0 596.0L252.1 587.7 M241.0 596.0L261.5 589.6 M241.0 596.0L267.8 592.6 M241.0 596.0L270.0 596.0 M250.0 468.0L248.7 469.5 M248.7 469.5L245.0 470.6 M245.0 470.6L240.0 471.0 M240.0 471.0L235.0 470.6 M235.0 470.6L231.3 469.5 M231.3 469.5L230.0 468.0 M230.0 468.0L231.3 466.5 M231.3 466.5L235.0 465.4 M235.0 465.4L240.0 465.0 M240.0 465.0L245.0 465.4 M245.0 465.4L248.7 466.5 M248.7 466.5L250.0 468.0 M134.0 479.0L155.0 564.0 M155.0 564.0L137.2 479.6 M137.2 479.6L157.5 565.0 M157.5 565.0L140.5 480.2 M140.5 480.2L160.1 566.0 M160.1 566.0L143.8 480.7 M143.8 480.7L162.6 567.0 M162.6 567.0L147.0 481.1 M147.0 481.1L165.2 567.8 M165.2 567.8L150.2 481.5 M150.2 481.5L167.7 568.3 M167.7 568.3L153.5 481.8 M153.5 481.8L170.3 568.9 M170.3 568.9L156.8 482.2 M156.8 482.2L172.8 569.5 M172.8 569.5L160.0 482.6 M160.0 482.6L175.4 570.0 M175.4 570.0L164.7 483.3 M164.7 483.3L179.1 570.4 M179.1 570.4L169.5 483.6 M169.5 483.6L182.8 570.8 M182.8 570.8L174.2 483.9 M174.2 483.9L186.5 571.1 M186.5 571.1L178.9 483.9 M178.9 483.9L190.2 571.5 M190.2 571.5L183.7 483.7 M183.7 483.7L193.9 571.6 M193.9 571.6L188.4 483.6 M188.4 483.6L197.6 571.8 M197.6 571.8L193.1 482.8 M193.1 482.8L201.3 571.9 M201.3 571.9L197.9 481.7 M197.9 481.7L205.0 572.0 M205.0 572.0L202.6 479.9 M202.6 479.9L208.7 571.9 M208.7 571.9L207.3 476.5 M207.3 476.5L212.5 571.7 M212.5 571.7L212.1 471.9 M212.1 471.9L216.2 571.6 M216.2 571.6L216.8 466.4 M216.8 466.4L219.9 571.4 M219.9 571.4L221.5 461.5 M221.5 461.5L223.6 571.3 M223.6 571.3L226.3 457.6 M226.3 457.6L227.3 571.1 M227.3 571.1L231.0 456.0 M231.0 456.0L231.0 571.0 M135.1 483.2L149.4 506.6 M137.4 492.8L151.5 516.3 M139.8 502.4L153.7 526.0 M142.1 511.9L155.8 535.7 M144.5 521.5L157.9 545.4 M146.9 531.1L160.0 555.1 M149.2 540.6L162.2 564.8 M151.6 550.2L162.6 567.0 M153.9 559.8L162.6 567.0 M134.0 472.0L134.0 490.0 M134.0 490.0L145.0 525.0 M145.0 525.0L155.0 564.0 M175.0 570.0L190.0 571.5 M190.0 571.5L205.0 572.0 M205.0 572.0L218.0 571.5 M218.0 571.5L231.0 571.0 M134.0 472.0L137.7 472.7 M137.7 472.7L141.4 473.4 M141.4 473.4L147.0 474.1 M147.0 474.1L153.0 474.8 M153.0 474.8L158.1 475.5 M158.1 475.5L162.7 476.2 M162.7 476.2L167.3 476.7 M167.3 476.7L171.9 477.1 M171.9 477.1L177.3 477.3 M177.3 477.3L184.2 476.8 M184.2 476.8L190.8 476.3 M190.8 476.3L195.9 475.2 M195.9 475.2L201.0 474.0 M201.0 474.0L203.8 471.7 M203.8 471.7L206.5 469.4 M206.5 469.4L209.3 466.7 M209.3 466.7L212.1 463.9 M212.1 463.9L214.2 461.6 M214.2 461.6L216.1 459.5 M216.1 459.5L217.9 457.7 M217.9 457.7L219.8 456.1 M219.8 456.1L221.8 454.5 M221.8 454.5L224.1 452.8 M224.1 452.8L226.4 451.4 M226.4 451.4L228.7 450.7 M228.7 450.7L231.0 450.0 M134.0 479.0L137.7 479.7 M137.7 479.7L141.4 480.4 M141.4 480.4L147.0 481.1 M147.0 481.1L153.0 481.8 M153.0 481.8L158.1 482.4 M158.1 482.4L162.7 483.0 M162.7 483.0L167.3 483.5 M167.3 483.5L171.9 483.8 M171.9 483.8L177.3 483.9 M177.3 483.9L184.2 483.7 M184.2 483.7L190.8 483.3 M190.8 483.3L195.9 482.2 M195.9 482.2L201.0 481.0 M201.0 481.0L204.2 478.7 M204.2 478.7L207.5 476.4 M207.5 476.4L209.9 474.1 M209.9 474.1L212.2 471.8 M212.2 471.8L214.5 469.2 M214.5 469.2L216.8 466.4 M216.8 466.4L219.2 463.8 M219.2 463.8L221.5 461.5 M221.5 461.5L223.6 459.5 M223.6 459.5L225.5 458.2 M225.5 458.2L227.3 456.9 M227.3 456.9L229.2 456.5 M229.2 456.5L231.0 456.0 M134.0 475.5L137.7 476.2 M137.7 476.2L141.4 476.9 M141.4 476.9L147.0 477.6 M147.0 477.6L153.0 478.3 M153.0 478.3L158.1 478.9 M158.1 478.9L162.7 479.6 M162.7 479.6L167.3 480.1 M167.3 480.1L171.9 480.5 M171.9 480.5L177.3 480.6 M177.3 480.6L184.2 480.3 M184.2 480.3L190.8 479.8 M190.8 479.8L195.9 478.7 M195.9 478.7L201.0 477.5 M201.0 477.5L204.0 475.2 M204.0 475.2L207.0 472.9 M207.0 472.9L209.6 470.4 M209.6 470.4L212.2 467.8 M212.2 467.8L214.4 465.4 M214.4 465.4L216.5 463.0 M216.5 463.0L218.5 460.8 M218.5 460.8L220.6 458.8 M220.6 458.8L222.7 457.0 M222.7 457.0L224.8 455.5 M224.8 455.5L226.8 454.2 M226.8 454.2L228.9 453.6 M228.9 453.6L231.0 453.0 M134.0 472.0L134.0 475.5 M134.0 475.5L137.7 472.7 M137.7 472.7L137.7 476.2 M137.7 476.2L141.4 473.4 M141.4 473.4L141.4 476.9 M141.4 476.9L147.0 474.1 M147.0 474.1L147.0 477.6 M147.0 477.6L153.0 474.8 M153.0 474.8L153.0 478.3 M153.0 478.3L158.1 475.5 M158.1 475.5L158.1 478.9 M158.1 478.9L162.7 476.2 M162.7 476.2L162.7 479.6 M162.7 479.6L167.3 476.7 M167.3 476.7L167.3 480.1 M167.3 480.1L171.9 477.1 M171.9 477.1L171.9 480.5 M171.9 480.5L177.3 477.3 M177.3 477.3L177.3 480.6 M177.3 480.6L184.2 476.8 M184.2 476.8L184.2 480.3 M184.2 480.3L190.8 476.3 M190.8 476.3L190.8 479.8 M190.8 479.8L195.9 475.2 M195.9 475.2L195.9 478.7 M195.9 478.7L201.0 474.0 M201.0 474.0L201.0 477.5 M201.0 477.5L203.8 471.7 M203.8 471.7L204.0 475.2 M204.0 475.2L206.5 469.4 M206.5 469.4L207.0 472.9 M207.0 472.9L209.3 466.7 M209.3 466.7L209.6 470.4 M209.6 470.4L212.1 463.9 M212.1 463.9L212.2 467.8 M212.2 467.8L214.2 461.6 M214.2 461.6L214.4 465.4 M214.4 465.4L216.1 459.5 M216.1 459.5L216.5 463.0 M216.5 463.0L217.9 457.7 M217.9 457.7L218.5 460.8 M218.5 460.8L219.8 456.1 M219.8 456.1L220.6 458.8 M220.6 458.8L221.8 454.5 M221.8 454.5L222.7 457.0 M222.7 457.0L224.1 452.8 M224.1 452.8L224.8 455.5 M224.8 455.5L226.4 451.4 M226.4 451.4L226.8 454.2 M226.8 454.2L228.7 450.7 M228.7 450.7L228.9 453.6 M228.9 453.6L231.0 450.0 M231.0 450.0L231.0 453.0 M137.7 476.2L134.0 479.0 M134.0 479.0L141.4 476.9 M141.4 476.9L137.7 479.7 M137.7 479.7L147.0 477.6 M147.0 477.6L141.4 480.4 M141.4 480.4L153.0 478.3 M153.0 478.3L147.0 481.1 M147.0 481.1L158.1 478.9 M158.1 478.9L153.0 481.8 M153.0 481.8L162.7 479.6 M162.7 479.6L158.1 482.4 M158.1 482.4L167.3 480.1 M167.3 480.1L162.7 483.0 M162.7 483.0L171.9 480.5 M171.9 480.5L167.3 483.5 M167.3 483.5L177.3 480.6 M177.3 480.6L171.9 483.8 M171.9 483.8L184.2 480.3 M184.2 480.3L177.3 483.9 M177.3 483.9L190.8 479.8 M190.8 479.8L184.2 483.7 M184.2 483.7L195.9 478.7 M195.9 478.7L190.8 483.3 M190.8 483.3L201.0 477.5 M201.0 477.5L195.9 482.2 M195.9 482.2L204.0 475.2 M204.0 475.2L201.0 481.0 M201.0 481.0L207.0 472.9 M207.0 472.9L204.2 478.7 M204.2 478.7L209.6 470.4 M209.6 470.4L207.5 476.4 M207.5 476.4L212.2 467.8 M212.2 467.8L209.9 474.1 M209.9 474.1L214.4 465.4 M214.4 465.4L212.2 471.8 M212.2 471.8L216.5 463.0 M216.5 463.0L214.5 469.2 M214.5 469.2L218.5 460.8 M218.5 460.8L216.8 466.4 M216.8 466.4L220.6 458.8 M220.6 458.8L219.2 463.8 M219.2 463.8L222.7 457.0 M222.7 457.0L221.5 461.5 M221.5 461.5L224.8 455.5 M224.8 455.5L223.6 459.5 M223.6 459.5L226.8 454.2 M226.8 454.2L225.5 458.2 M225.5 458.2L228.9 453.6 M228.9 453.6L227.3 456.9 M227.3 456.9L231.0 453.0 M231.0 453.0L229.2 456.5 M140.0 438.0L139.5 474.0 M139.5 474.0L146.0 438.2 M146.0 438.2L145.0 477.0 M145.0 477.0L156.0 438.5 M156.0 438.5L151.0 479.0 M151.0 479.0L164.0 438.8 M164.0 438.8L158.0 480.5 M158.0 480.5L177.0 439.2 M177.0 439.2L172.0 482.0 M172.0 482.0L185.0 439.5 M185.0 439.5L181.0 482.5 M181.0 482.5L195.0 440.0 M195.0 440.0L191.0 481.5 M191.0 481.5L201.0 440.0 M201.0 440.0L197.0 480.0 M197.0 480.0L213.0 440.5 M213.0 440.5L204.0 474.0 M140.0 437.5L139.0 474.0 M195.0 440.0L218.0 457.0 M195.0 440.0L211.0 464.0 M201.0 440.0L240.0 446.0 M218.0 457.0L258.0 446.0 M213.0 440.5L222.0 452.0 M220.0 455.0L250.0 452.0 M222.0 458.0L250.0 456.0 M224.0 461.0L250.0 460.0 M226.0 464.0L250.0 464.0 M218.0 457.0L252.0 448.0 M229.0 467.0L250.0 468.0 M232.0 470.0L256.0 471.0 M250.0 452.0L256.0 471.0 M258.0 446.0L256.0 471.0 M256.0 471.0L305.0 472.0 M256.0 471.0L262.0 483.0 M262.0 483.0L285.0 483.0 M285.0 483.0L300.0 476.0 M250.0 476.0L262.0 483.0 M263.0 472.5L263.0 483.0 M266.2 472.5L266.2 483.0 M269.4 472.5L269.4 483.0 M272.6 472.5L272.6 483.0 M275.8 472.5L275.8 483.0 M279.0 472.5L279.0 483.0 M282.2 472.5L282.2 483.0 M160.0 414.0L273.0 412.0 M160.0 414.0L160.0 437.5 M165.0 437.5L176.0 413.8 M176.0 413.8L183.0 438.0 M183.0 438.0L189.0 413.6 M189.0 413.6L195.0 438.3 M195.0 438.3L203.0 413.4 M203.0 413.4L209.0 438.6 M209.0 438.6L216.0 413.2 M216.0 413.2L223.0 439.0 M160.0 414.0L165.0 437.5 M176.0 413.8L170.0 438.0 M189.0 413.6L187.0 438.0 M203.0 413.4L200.0 438.0 M216.0 413.2L229.0 431.0 M216.0 413.2L239.0 423.0 M216.0 413.2L258.0 417.0 M258.0 417.0L271.0 413.0 M239.0 423.0L258.0 417.0 M239.0 423.0L229.0 431.0 M229.0 431.0L223.0 439.0 M238.0 424.0L269.0 420.0 M236.5 425.7L268.6 422.2 M235.0 427.4L268.2 424.4 M233.5 429.1L267.8 426.6 M232.0 430.8L267.4 428.8 M230.5 432.5L267.0 431.0 M229.0 434.2L266.6 433.2 M227.5 435.9L266.2 435.4 M269.0 420.0L266.0 441.0 M258.0 417.0L269.0 420.0 M222.0 454.0L258.0 449.0 M221.7 456.0L257.4 451.6 M221.4 458.0L256.8 454.2 M221.1 460.0L256.2 456.8 M220.8 462.0L255.6 459.4 M220.5 464.0L255.0 462.0 M220.2 466.0L254.4 464.6" stroke="#c89a96" stroke-width="1.1" fill="none" opacity="1"/>
<path d="M92.7 52.7L403.2 52.3 M403.2 52.3L401.7 606.8 M401.7 606.8L109.2 605.2 M109.2 605.2L92.7 52.7" stroke="#7fffd4" stroke-width="3" fill="none" stroke-linecap="square"/>
<path d="M110.8,599.6 L88.4,-132.1 M421.0,643.6 L425.9,-159.7 M732.3,604.2 L764.0,-135.0" stroke="#222" stroke-width="1.2" fill="none"/>
</g>
</svg>
</body></html>
